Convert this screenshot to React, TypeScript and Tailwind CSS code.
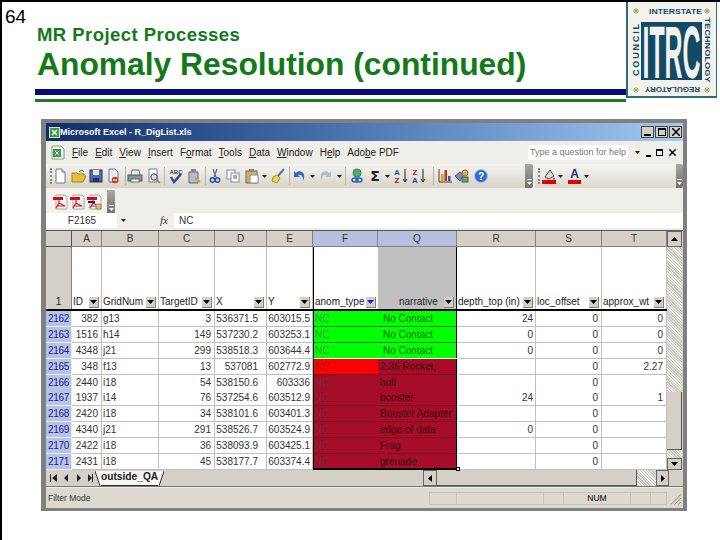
import React from "react";

const cols = "grid-cols-[26px_30px_57px_56px_52px_46px_65px_79px_79px_66px_65px]";
const heads = ["A", "B", "C", "D", "E", "F", "Q", "R", "S", "T"];
const filters = ["ID", "GridNum", "TargetID", "X", "Y", "anom_type", "narrative", "depth_top (in)", "loc_offset", "approx_wt"];
const rows = [
  ["2162", "382", "g13", "3", "536371.5", "603015.5", "NC", "No Contact", "24", "0", "0"],
  ["2163", "1516", "h14", "149", "537230.2", "603253.1", "NC", "No Contact", "0", "0", "0"],
  ["2164", "4348", "j21", "299", "538518.3", "603644.4", "NC", "No Contact", "0", "0", "0"],
  ["2165", "348", "f13", "13", "537081", "602772.9", "NC", "2.36 Rocket,", "", "0", "2.27"],
  ["2166", "2440", "i18", "54", "538150.6", "603336", "NC", "bolt", "", "0", ""],
  ["2167", "1937", "i14", "76", "537254.6", "603512.9", "NC", "booster", "24", "0", "1"],
  ["2168", "2420", "i18", "34", "538101.6", "603401.3", "NC", "Booster Adapter", "", "0", ""],
  ["2169", "4340", "j21", "291", "538526.7", "603524.9", "NC", "edge of data", "0", "0", ""],
  ["2170", "2422", "i18", "36", "538093.9", "603425.1", "NC", "Frag", "", "0", ""],
  ["2171", "2431", "i18", "45", "538177.7", "603374.4", "NC", "grenade", "", "0", ""],
];
const menus: [string, string, string][] = [
  ["", "F", "ile"], ["", "E", "dit"], ["", "V", "iew"], ["", "I", "nsert"], ["F", "o", "rmat"],
  ["", "T", "ools"], ["", "D", "ata"], ["", "W", "indow"], ["H", "e", "lp"], ["Ado", "b", "e PDF"],
];
const dither = "bg-[repeating-linear-gradient(45deg,#eeeee8_0,#eeeee8_1px,#c8c8c0_1px,#c8c8c0_2px)]";

function Arrow({ blue }: { blue?: boolean }) {
  return (
    <span className="absolute right-[2px] bottom-[1px] flex h-[11px] w-[10px] items-center justify-center border-r border-b border-[#808080] bg-[#d4d0c8]">
      <svg width="7" height="4" viewBox="0 0 7 4"><path d="M0 0h7L3.5 4z" fill={blue ? "#1a1ad0" : "#000"} /></svg>
    </span>
  );
}

function Sep({ className }: { className: string }) {
  return <span className={`h-[18px] w-px shrink-0 bg-[#b8b5a8] ${className}`} />;
}

function Handle({ className = "" }: { className?: string }) {
  return (
    <span className={`flex h-[24px] shrink-0 flex-col items-center justify-end gap-[2px] rounded-r-[2px] bg-gradient-to-b from-[#a8a8a2] to-[#70706a] pb-[3px] ${className}`}>
      <span className="h-px w-[5px] bg-white" />
      <svg width="5" height="3" viewBox="0 0 5 3"><path d="M0 0h5L2.5 3z" fill="#fff" /></svg>
    </span>
  );
}

function Pdf({ x }: { x?: boolean }) {
  return (
    <svg width="15" height="16" viewBox="0 0 15 16" className="shrink-0">
      <path d="M3 1h9l2 2v12H3z" fill="#f6f4f2" stroke="#a8a8a8" />
      <path d="M0 3h10v3H0z" fill="#d01010" />
      <path d="M6 6v3l-3 5M6 9l6 3M4 12h8" stroke="#c82020" strokeWidth="1.2" fill="none" />
      {x && <path d="M1 7h7v2H1z" fill="#202070" />}
      {x && <path d="M9 10h5v5H9z" fill="#d8c850" stroke="#667" strokeWidth=".6" />}
    </svg>
  );
}

function G({ children, className = "", w = 16 }: { children: React.ReactNode; className?: string; w?: number }) {
  return <svg width={w} height="16" viewBox={`0 0 ${w} 16`} className={`shrink-0 ${className}`}>{children}</svg>;
}

function Caret({ className = "" }: { className?: string }) {
  return <svg width="5" height="3" viewBox="0 0 5 3" className={`shrink-0 ${className}`}><path d="M0 0h5L2.5 3z" fill="#222" /></svg>;
}

function Star({ x, y }: { x: number; y: number }) {
  return <path d={`M${x - 3} ${y}h6M${x} ${y - 3}v6M${x - 2} ${y - 2}l4 4M${x + 2} ${y - 2}l-4 4`} stroke="#8aa050" strokeWidth="0.9" />;
}

function Logo() {
  const f = "'Liberation Sans', sans-serif";
  return (
    <svg width="92" height="100" viewBox="626 0 92 100" className="block shrink-0">
      <rect x="626" y="0" width="92" height="100" fill="#fff" />
      <rect x="626" y="0" width="91" height="98" fill="#2e6a80" />
      <rect x="628" y="0" width="88" height="96" fill="#f4f2ec" />
      <text x="675.5" y="14" textAnchor="middle" fontFamily={f} fontSize="8" fontWeight="700" textLength="53" lengthAdjust="spacingAndGlyphs" fill="#124a66">INTERSTATE</text>
      <text transform="translate(672.5 87) rotate(180)" textAnchor="middle" fontFamily={f} fontSize="7.5" fontWeight="700" textLength="55" lengthAdjust="spacingAndGlyphs" fill="#124a66">REGULATORY</text>
      <text transform="translate(639 50) rotate(-90)" textAnchor="middle" fontFamily={f} fontSize="9" fontWeight="700" textLength="52" lengthAdjust="spacing" fill="#124a66">COUNCIL</text>
      <text transform="translate(705 50) rotate(90)" textAnchor="middle" fontFamily={f} fontSize="8" fontWeight="700" textLength="65" lengthAdjust="spacingAndGlyphs" fill="#124a66">TECHNOLOGY</text>
      <rect x="641" y="22" width="61" height="58" fill="#124a66" />
      <text x="671.5" y="78" textAnchor="middle" fontFamily={f} fontSize="74" fontWeight="700" textLength="58" lengthAdjust="spacingAndGlyphs" fill="#f4f2ec">ITRC</text>
      <Star x={636} y={11} />
      <Star x={707} y={11} />
      <Star x={636} y={90} />
      <Star x={707} y={90} />
    </svg>
  );
}

export default function App() {
  const sans = "font-['Liberation_Sans',Arial,sans-serif]";
  return (
    <div className={`h-[540px] w-[720px] overflow-hidden border-t-2 border-l-2 border-black bg-white ${sans}`}>
      <div className="flex h-[101px] items-start pr-[2px]">
        <div className="w-[33px] shrink-0 pl-[3px] pt-[4px] text-[19px] leading-[22px] text-black">64</div>
        <div className="min-w-0 flex-1 pt-[22px]">
          <div className="pl-[2px] text-[18.5px] font-bold leading-[22px] tracking-[0.45px] text-[#127a18]">MR Project Processes</div>
          <div className="whitespace-nowrap pl-[2px] text-[31.8px] font-bold leading-[37px] text-[#127a18]">Anomaly Resolution (continued)</div>
          <div className="mt-[6px] h-[6px] bg-[#040a80]" />
          <div className="mt-[4px] h-[3px] bg-[#1e7a1e]" />
        </div>
        <div className="-mt-[2px] shrink-0"><Logo /></div>
      </div>

      <div className="ml-[39px] mt-[16px] w-[646px] border-t-[4px] border-r-[4px] border-b-[3px] border-l-[5px] border-[#808080] bg-[#efeee9]">
        {/* title bar */}
        <div className="flex h-[18px] items-center bg-gradient-to-r from-[#102c68] via-[#5078b4] to-[#a6caf0] pr-[1px] pl-[3px]">
          <svg width="11" height="11" viewBox="0 0 11 11"><rect x=".5" y=".5" width="10" height="10" fill="#3a9a48" stroke="#d8e8d8" /><path d="M3 3l5 5M8 3l-5 5" stroke="#fff" strokeWidth="1.4" /></svg>
          <span className="whitespace-nowrap text-[9px] font-bold leading-none text-white">Microsoft Excel - R_DigList.xls</span>
          <div className="ml-auto flex gap-[1px]">
            {["min", "max", "close"].map((k) => (
              <span key={k} className="flex h-[12px] w-[13px] items-center justify-center border border-[#444] bg-[#d4d0c8]">
                {k === "min" && <span className="mt-[6px] h-[2px] w-[7px] bg-black" />}
                {k === "max" && <span className="h-[8px] w-[8px] border border-t-2 border-black" />}
                {k === "close" && <svg width="8" height="8" viewBox="0 0 8 8"><path d="M0 0l8 8M8 0L0 8" stroke="#000" strokeWidth="1.5" /></svg>}
              </span>
            ))}
          </div>
        </div>

        {/* menu */}
        <div className="flex h-[23px] items-center pl-[5px] text-[10px] text-[#222]">
          <svg width="14" height="15" viewBox="0 0 14 15" className="mr-[7px] shrink-0"><path d="M1 1h9l3 3v10H1z" fill="#f4f8f4" stroke="#8a9a8a" /><rect x="2" y="4" width="8" height="8" fill="#3a9a48" /><path d="M4 6l4 4M8 6l-4 4" stroke="#fff" /></svg>
          <div className="flex gap-[7px] whitespace-nowrap">
            {menus.map(([a, u, b]) => (
              <span key={a + u + b}>{a}<span className="underline">{u}</span>{b}</span>
            ))}
          </div>
          <span className="ml-auto flex h-[15px] w-[100px] items-center whitespace-nowrap bg-white pl-[2px] text-[9px] text-[#777]">Type a question for help</span>
          <span className="flex w-[55px] items-center pl-[7px]">
            <Caret />
            <span className="ml-[6px] mt-[6px] h-[2px] w-[5px] bg-black" />
            <span className="ml-[5px] h-[7px] w-[7px] border border-t-2 border-black" />
            <svg width="7" height="7" viewBox="0 0 8 8" className="ml-[6px]"><path d="M0 0l8 8M8 0L0 8" stroke="#000" strokeWidth="1.6" /></svg>
          </span>
        </div>

        {/* toolbars */}
        <div className="flex h-[25px] items-start">
          <div className="flex h-[24px] w-[487px] items-center rounded-r-[3px] bg-gradient-to-b from-[#f6f5f1] to-[#d6d3c8]">
            <span className="ml-[4px] h-[16px] w-0 border-l-2 border-dotted border-[#888]" />
            <G><path d="M4 1h6l3 3v11H4z" fill="#fff" stroke="#6a7a98" /><path d="M10 1v3h3" fill="#dde" stroke="#6a7a98" /></G>
            <G className="ml-[3px]"><path d="M1 5h5l1 1h6v2h2l-3 6H1z" fill="#e8c040" stroke="#a08020" /><path d="M8 4l3-2 2 2" stroke="#3a8a3a" fill="none" /></G>
            <G className="ml-[1px]"><rect x="2" y="2" width="12" height="12" fill="#5066b8" stroke="#334" /><rect x="5" y="2" width="6" height="5" fill="#e8e8f0" /><rect x="5" y="10" width="6" height="4" fill="#20306a" /></G>
            <G className="ml-[2px]"><path d="M3 1h6l3 3v10H3z" fill="#e8ecf8" stroke="#6a7a98" /><circle cx="9" cy="12" r="3.2" fill="#c84020" /><rect x="7" y="11.4" width="4" height="1.2" fill="#fff" /></G>
            <Sep className="ml-[3px]" />
            <G className="ml-[1px]"><rect x="1" y="7" width="14" height="6" fill="#7c9a88" stroke="#556" /><path d="M4 7l1-5h7l1 5z" fill="#e8f0e8" stroke="#667" /><rect x="4" y="11" width="8" height="3" fill="#fff" stroke="#667" /></G>
            <G className="ml-[3px]"><path d="M3 1h8v13H3z" fill="#fff" stroke="#778" /><circle cx="8" cy="9" r="3.2" fill="#cfe0f0" stroke="#345" /><path d="M10 11l4 4" stroke="#a08050" strokeWidth="1.6" /></G>
            <Sep className="ml-[2px]" />
            <G className="ml-[3px]"><text x="8" y="6" textAnchor="middle" fontSize="6" fontWeight="700" fill="#444">ABC</text><path d="M3 9l3 5 7-8" stroke="#2848a0" strokeWidth="2.4" fill="none" /></G>
            <G className="ml-[2px]"><path d="M3 4h9v11H3z" fill="#b8bcc8" stroke="#667" /><rect x="5" y="1" width="5" height="3" fill="#888" /><path d="M9 10l5 4" stroke="#c8a040" strokeWidth="2" /></G>
            <Sep className="ml-[3px]" />
            <G className="ml-[1px]"><path d="M6 1l3 8M10 1L7 9" stroke="#667" strokeWidth="1.2" /><circle cx="5.5" cy="12" r="2.2" fill="none" stroke="#2050a0" strokeWidth="1.4" /><circle cx="10.5" cy="12" r="2.2" fill="none" stroke="#2050a0" strokeWidth="1.4" /></G>
            <G className="ml-[2px]"><rect x="2" y="2" width="8" height="9" fill="#fff" stroke="#889" /><rect x="6" y="5" width="8" height="9" fill="#fff" stroke="#889" /><path d="M8 8h4M8 10h4" stroke="#3060b0" /></G>
            <G className="ml-[3px]"><rect x="2" y="3" width="11" height="12" fill="#d0b068" stroke="#765" /><rect x="5" y="1" width="5" height="3" fill="#888" /><rect x="6" y="7" width="8" height="8" fill="#fff" stroke="#889" /></G>
            <Caret className="ml-[2px]" />
            <G className="ml-[3px]"><path d="M14 1L8 8" stroke="#5070b8" strokeWidth="2" /><path d="M3 9l4-2 3 3-3 5-5-2z" fill="#ecd060" stroke="#a89030" /></G>
            <Sep className="ml-[3px]" />
            <G className="ml-[1px]"><path d="M3 3v6h6L7 7c2-1 5 0 5 4 0 1-1 2-1 2 3-2 3-7 0-9-2-1-4-1-6 1z" fill="#3564c4" /></G>
            <Caret className="ml-[3px]" />
            <G className="ml-[3px]"><path d="M13 3v6H7l2-2c-2-1-5 0-5 4 0 1 1 2 1 2-3-2-3-7 0-9 2-1 4-1 6 1z" fill="#aebccc" /></G>
            <Caret className="ml-[3px]" />
            <Sep className="ml-[3px]" />
            <G className="ml-[3px]"><circle cx="8" cy="5" r="4" fill="#58a868" stroke="#386" /><ellipse cx="6" cy="12" rx="3" ry="2" fill="none" stroke="#2858b0" strokeWidth="1.4" /><ellipse cx="10" cy="12" rx="3" ry="2" fill="none" stroke="#2858b0" strokeWidth="1.4" /></G>
            <span className="ml-[3px] w-[14px] shrink-0 text-center font-['DejaVu_Sans',sans-serif] text-[14px] font-bold leading-none text-[#222]">Σ</span>
            <Caret className="ml-[3px]" />
            <G w={18} className="ml-[2px]"><text x="5" y="7" textAnchor="middle" fontSize="8" fontWeight="700" fill="#2050a0">A</text><text x="5" y="15" textAnchor="middle" fontSize="8" fontWeight="700" fill="#b02020">Z</text><path d="M13 1v13M11 11l2 3 2-3" stroke="#222" fill="none" /></G>
            <G w={18}><text x="5" y="7" textAnchor="middle" fontSize="8" fontWeight="700" fill="#b02020">Z</text><text x="5" y="15" textAnchor="middle" fontSize="8" fontWeight="700" fill="#2050a0">A</text><path d="M13 1v13M11 11l2 3 2-3" stroke="#222" fill="none" /></G>
            <Sep className="ml-[5px]" />
            <G className="ml-[3px]"><path d="M2 14V1M2 14h13" stroke="#444" /><path d="M4 13V6h2.5v7z" fill="#d8a020" /><path d="M7.5 13V2H10v11z" fill="#c03820" /><path d="M11 13V8h2.5v5z" fill="#3858b0" /></G>
            <G className="ml-[1px]"><path d="M1 8l5-4 4 3-4 6z" fill="#7f88c8" stroke="#556" /><circle cx="11" cy="5" r="3" fill="#e0b040" stroke="#864" /><rect x="8" y="9" width="6" height="5" fill="#6aa06a" stroke="#464" /></G>
            <G className="ml-[3px]"><circle cx="8" cy="8" r="6.5" fill="#2f6ed0" stroke="#a8c4e8" /><text x="8" y="12" textAnchor="middle" fontSize="10" fontWeight="700" fill="#fff">?</text></G>
            <Handle className="ml-auto w-[8px]" />
          </div>
          <div className="ml-[2px] flex h-[24px] flex-1 items-center bg-gradient-to-b from-[#f6f5f1] to-[#dcd9cf]">
            <span className="ml-[3px] h-[16px] w-0 border-l-2 border-dotted border-[#888]" />
            <G className="ml-[2px]" w={14}><path d="M3 9l5-7 4 6-5 3z" fill="#ddd" stroke="#445" /><path d="M12 9c1 1 1 3 0 3s-1-2 0-3z" fill="#446" /><rect x="0" y="12" width="14" height="4" fill="#e00000" /></G>
            <Caret className="ml-[2px]" />
            <span className="relative ml-[5px] flex h-[16px] w-[13px] justify-center text-[12px] font-bold leading-[12px] text-[#1a2a80]">A<span className="absolute bottom-0 left-0 h-[4px] w-[13px] bg-[#e00000]" /></span>
            <Caret className="ml-[3px]" />
            <Handle className="ml-auto w-[7px]" />
          </div>
        </div>

        {/* pdf toolbar */}
        <div className="flex h-[24px] items-center pt-[1px]">
          <div className="flex h-[23px] w-[61px] items-center gap-[2px] bg-[#f3f2ee] pl-[7px]">
            <Pdf /><Pdf /><Pdf x />
          </div>
          <Handle className="h-[23px] w-[8px]" />
        </div>

        {/* formula bar */}
        <div className="flex h-[15px] items-center text-[10px] leading-none text-[#333]">
          <span className="flex h-[15px] w-[71px] items-center justify-center bg-white pl-[1px]">F2165</span>
          <span className="flex w-[12px] justify-center"><Caret /></span>
          <span className="w-[45px] pr-[6px] text-right font-['Liberation_Serif',serif] text-[11px] italic">fx</span>
          <span className="flex h-[15px] flex-1 items-center bg-white pl-[5px]">NC</span>
        </div>

        {/* sheet */}
        <div className="mt-[2px] flex border-t border-[#555]">
          <div className="relative min-w-0 flex-1 bg-white">
            <div className={`grid ${cols} h-[16px] text-[10px] leading-none text-[#333]`}>
              <div className="border-r border-b border-[#555] bg-[#d4d0c8]" />
              {heads.map((h) => (
                <div key={h} className={`flex items-center justify-center border-r border-b border-[#808080] ${h === "F" || h === "Q" ? "bg-[#b4c0dc]" : "bg-[#d4d0c8]"}`}>{h}</div>
              ))}
            </div>
            <div className={`grid ${cols} h-[64px] border-b-2 border-black text-[10px] leading-none text-[#222]`}>
              <div className="flex items-end justify-center border-r border-[#808080] bg-[#d4d0c8] pb-[2px]">1</div>
              {filters.map((n, i) => (
                <div
                  key={n}
                  className={`relative flex items-end overflow-hidden whitespace-nowrap pb-[2px] pl-[1px] ${i === 6 ? "bg-[#c0c0c0] pl-[21px]" : ""} ${i === 5 ? "border-l border-black" : ""} ${i === 6 ? "border-r border-black" : i === 5 ? "" : "border-r border-[#c0c0c0]"}`}
                >
                  {n}
                  <Arrow blue={i === 5} />
                </div>
              ))}
            </div>
            {rows.map((r, ri) => {
              const green = ri < 3;
              const first = ri === 3;
              const fill = green ? "bg-[#00ff00] border-[#0a7a0a]" : "bg-[#a50d28] border-[#7a0a1c]";
              const cell = "border-r border-b border-[#c0c0c0]";
              return (
                <div key={r[0]} className={`grid ${cols} h-[15.9px] overflow-hidden text-[10px] leading-[15px] text-[#333]`}>
                  <div className="border-r border-b border-[#e8ecf8] bg-[#b8c4e4] text-center tracking-[-0.3px] text-[#1a1a90]">{r[0]}</div>
                  <div className={`${cell} pr-[3px] text-right`}>{r[1]}</div>
                  <div className={`${cell} pl-[1px]`}>{r[2]}</div>
                  <div className={`${cell} pr-[3px] text-right`}>{r[3]}</div>
                  <div className={`${cell} pr-[8px] text-right`}>{r[4]}</div>
                  <div className={`${cell} pr-[2px] text-right`}>{r[5]}</div>
                  <div className={`border-b border-l border-l-black pl-[1px] ${first ? "border-b-[#7a0a1c] bg-[#ff0000] text-[#a81818]" : green ? `${fill} text-[#30a030]` : `${fill} text-[#703038]`}`}>{r[6]}</div>
                  <div className={`whitespace-nowrap border-r border-b border-r-black ${fill} ${green ? "pl-[5px] text-[#0a6a0a]" : "pl-[2px] text-[#3a0a10]"}`}>{r[7]}</div>
                  <div className={`${cell} pr-[2px] text-right`}>{r[8]}</div>
                  <div className={`${cell} pr-[3px] text-right`}>{r[9]}</div>
                  <div className={`${cell} pr-[3px] text-right`}>{r[10]}</div>
                </div>
              );
            })}
            {/* selection around F2165:Q2171 */}
            <div className="pointer-events-none absolute top-[127px] left-[267px] h-[112px] w-[146px] border-t border-r-2 border-b-2 border-l border-t-[#e0f8f8] border-r-[#e0f8f8] border-b-black border-l-black">
              <span className="absolute -right-[3px] -bottom-[3px] h-[4px] w-[4px] border border-black bg-white" />
            </div>
          </div>
          <div className="flex w-[16px] shrink-0 flex-col bg-[#d4d0c8] pr-[1px]">
            <span className="flex h-[16px] items-center justify-center border border-[#666] bg-[#d4d0c8]"><svg width="7" height="4" viewBox="0 0 7 4"><path d="M0 4h7L3.5 0z" fill="#000" /></svg></span>
            <div className={`h-[145px] ${dither}`} />
            <div className="h-[58px] border-r border-b border-[#555] bg-[#d4d0c8]" />
            <div className={`h-[8px] ${dither}`} />
            <span className="flex h-[12px] items-center justify-center border border-[#666] bg-[#d4d0c8]"><svg width="7" height="4" viewBox="0 0 7 4"><path d="M0 0h7L3.5 4z" fill="#000" /></svg></span>
          </div>
        </div>

        {/* sheet tabs and horizontal scrollbar */}
        <div className="flex h-[17px] items-center border-b border-[#777] bg-[#d4d0c8]">
          <div className="flex w-[377px] items-center">
            <svg width="45" height="8" viewBox="0 0 45 8" className="ml-[2px] shrink-0">
              <path d="M2 0h1v8H2zM9 0v8L4 4zM20 0v8l-4-4zM29 0v8l4-4zM40 0v8l4-4zM44 0h1v8h-1z" fill="#222" />
            </svg>
            <svg width="6" height="15" viewBox="0 0 6 15" className="ml-[2px] shrink-0"><path d="M0 0l5 15h1V0z" fill="#f6f6f2" /><path d="M0 0l5 15" stroke="#333" /></svg>
            <span className="flex h-[15px] items-center border-b border-[#333] bg-[#f6f6f2] text-[10.2px] font-bold leading-none text-[#222]">outside_QA</span>
            <svg width="6" height="15" viewBox="0 0 6 15" className="shrink-0"><path d="M6 0L1 15H0V0z" fill="#f6f6f2" /><path d="M6 0L1 15" stroke="#333" /></svg>
          </div>
          <span className="flex h-[16px] w-[14px] items-center justify-center border border-[#666]"><svg width="4" height="7" viewBox="0 0 4 7"><path d="M4 0v7L0 3.5z" fill="#000" /></svg></span>
          <span className="h-[16px] w-[200px] border-r border-b border-[#555] bg-[#d4d0c8]" />
          <span className={`h-[16px] w-[19px] ${dither}`} />
          <span className="flex h-[16px] w-[13px] items-center justify-center border border-[#666]"><svg width="4" height="7" viewBox="0 0 4 7"><path d="M0 0v7l4-3.5z" fill="#000" /></svg></span>
        </div>

        {/* status bar */}
        <div className="flex h-[21px] items-center border-t border-[#efeee9] bg-[#dcd9d0] pl-[2px] text-[8.5px] text-[#333]">
          <span>Filter Mode</span>
          <div className="ml-auto flex h-[13px] items-stretch">
            {[27, 87, 20, 67, 20, 16].map((w, i) => (
              <span key={i} style={{ width: w }} className="flex items-center justify-center border-y border-l border-[#c4c1b8] text-[8.5px] text-black">
                {i === 3 ? "NUM" : ""}
              </span>
            ))}
            <svg width="17" height="13" viewBox="0 0 17 13" className="border-l border-[#c4c1b8]"><path d="M15 2L4 13M15 6l-7 7M15 10l-3 3" stroke="#888" /></svg>
          </div>
        </div>
      </div>
    </div>
  );
}
